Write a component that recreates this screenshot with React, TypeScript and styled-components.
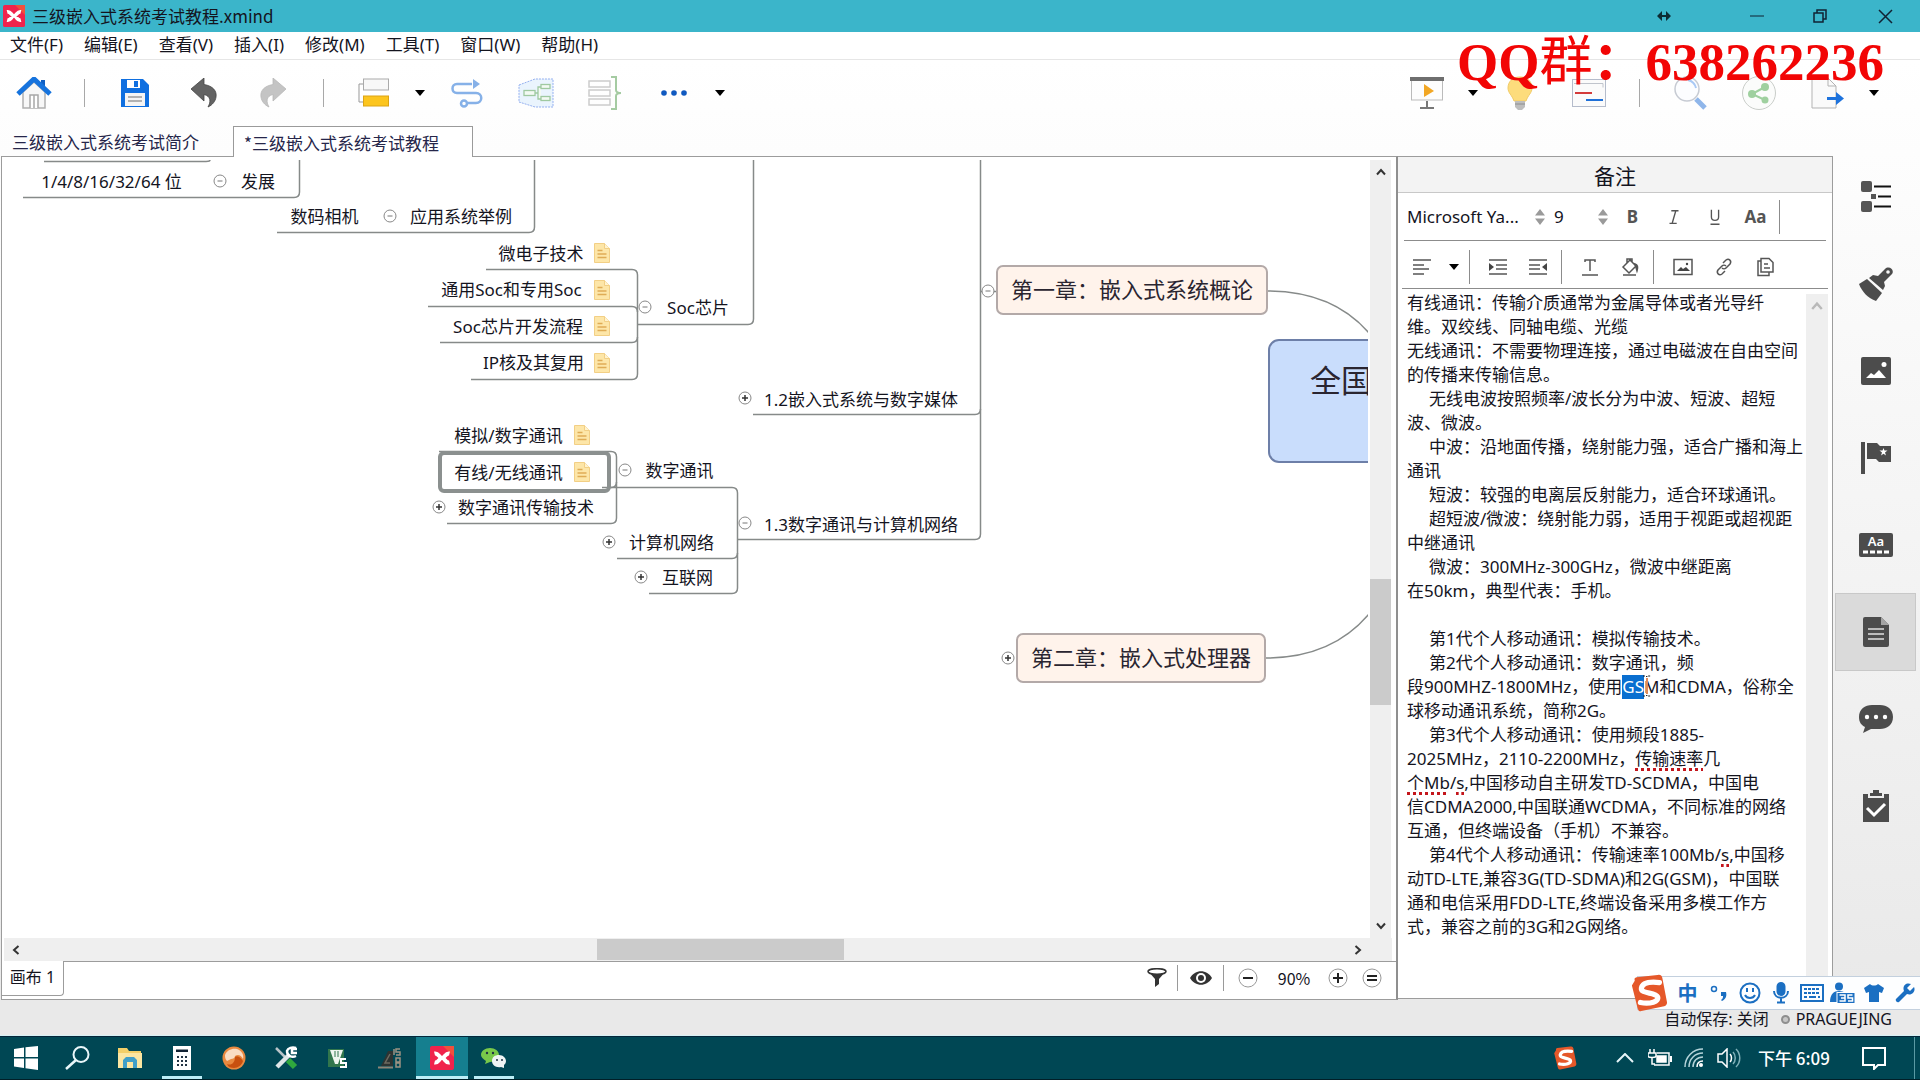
import React from "react";
import styled, { createGlobalStyle, css } from "styled-components";

const UI = `"Noto Sans", "Noto Sans CJK SC", sans-serif`;
const CJK = `"Noto Sans CJK SC", sans-serif`;

const Global = createGlobalStyle`
  * { box-sizing: border-box; }
  body { margin: 0; font-family: ${UI}; font-size: 17px; line-height: 24px; color: #14141e; }
  button, select, input { font: inherit; color: inherit; }
  button { border: 0; padding: 0; background: none; display: inline-flex; align-items: center; justify-content: center; flex: none; }
  svg { display: block; flex: none; }
`;

const Desktop = styled.div`
  min-height: 100vh;
  display: flex;
  flex-direction: column;
  background: linear-gradient(#ffffff 60px, #fcfcfc 200px, #e9e9e9 1000px);
`;

/* ---------- title, menu ---------- */
const TitleBar = styled.header`
  flex: none;
  height: 32px;
  display: flex;
  align-items: center;
  background: #3bb5ca;
  padding-left: 3px;
`;
const Title = styled.h1`
  flex: 1;
  margin: 0 0 0 7px;
  font: 400 17px/24px ${CJK};
`;
const WindowButton = styled.button<{ $w: number }>`
  width: ${(p) => p.$w}px;
  height: 28px;
`;
const MenuBar = styled.nav`
  flex: none;
  height: 28px;
  display: flex;
  align-items: center;
  gap: 21px;
  padding: 0 0 2px 10px;
  background: #fff;
  border-bottom: 1px solid #e6e6e6;
`;

/* ---------- main toolbar ---------- */
const Toolbar = styled.div`
  flex: none;
  height: 66px;
  display: flex;
  align-items: center;
  justify-content: space-between;
  padding: 0 42px 0 8px;
`;
const ToolGroup = styled.div`
  display: flex;
  align-items: center;
  gap: 17px;
`;
const Split = styled.div`
  display: flex;
`;
const ToolButton = styled.button`
  width: 52px;
  height: 40px;
`;
const CaretButton = styled.button`
  width: 24px;
  height: 40px;
  margin: 0 -8px 0 8px;
`;
const ToolRule = styled.span`
  width: 15px;
  height: 28px;
  background: linear-gradient(#a8a8a8, #a8a8a8) center / 1px 100% no-repeat;
`;
const Watermark = styled.div`
  position: absolute;
  top: 32px;
  right: 36px;
  font: 700 53px/60px "Liberation Serif", "Noto Sans CJK SC", serif;
  color: #f20505;
  white-space: nowrap;
  pointer-events: none;
  span { font-weight: 400; }
`;

/* ---------- document tabs ---------- */
const Tabs = styled.div`
  flex: none;
  height: 30px;
  display: flex;
`;
const Tab = styled.button<{ $active?: boolean }>`
  width: ${(p) => (p.$active ? 240 : 233)}px;
  height: ${(p) => (p.$active ? 31 : 30)}px;
  padding: 1px 0 0 ${(p) => (p.$active ? 10 : 12)}px;
  justify-content: flex-start;
  font-family: ${CJK};
  color: #26264a;
  ${(p) =>
    p.$active &&
    css`
      position: relative;
      z-index: 1;
      background: #fff;
      border: 1px solid #9a9a9a;
      border-bottom: 0;
    `}
`;

/* ---------- workspace ---------- */
const Workspace = styled.main`
  flex: 1;
  display: flex;
  margin-left: 1px;
`;
const Editor = styled.section`
  flex: 1;
  min-width: 0;
  display: flex;
  flex-direction: column;
  background: #fff;
  border: 1px solid #9c9c9c;
  border-right: 2px solid #8f8f8f;
  padding-top: 3px;
`;
const CanvasRow = styled.div`
  flex: 1;
  display: flex;
  gap: 2px;
  padding-right: 5px;
`;
const Canvas = styled.div`
  flex: 1;
  min-width: 0;
  min-height: 778px;
  position: relative;
  overflow: hidden;
`;
const Links = styled.svg`
  position: absolute;
  left: 0;
  top: 0;
`;
const VScroll = styled.div`
  width: 21px;
  display: flex;
  flex-direction: column;
  align-items: center;
  background: #efefef;
`;
const VThumb = styled.div`
  width: 21px;
  flex: 126 0 0;
  background: #cbcbcb;
`;
const Track = styled.div<{ $grow: number }>`
  flex: ${(p) => p.$grow} 0 0;
`;
const HScroll = styled.div`
  height: 23px;
  flex: none;
  display: flex;
  align-items: center;
  margin: 0 4px 0 2px;
  padding-right: 22px;
  background: #efefef;
`;
const HThumb = styled.div`
  flex: 247 0 0;
  height: 21px;
  background: #cbcbcb;
`;
const ScrollButton = styled.button`
  width: 24px;
  height: 24px;
`;

const Topic = styled.div<{ $x: number; $y: number; $w: number }>`
  position: absolute;
  left: ${(p) => p.$x}px;
  top: ${(p) => p.$y}px;
  width: ${(p) => p.$w}px;
  height: 24px;
  display: flex;
  justify-content: center;
  white-space: nowrap;
`;
const BoxTopic = styled(Topic)<{ $root?: boolean }>`
  height: ${(p) => (p.$root ? 124 : 50)}px;
  align-items: ${(p) => (p.$root ? "flex-start" : "center")};
  justify-content: ${(p) => (p.$root ? "flex-start" : "center")};
  padding: ${(p) => (p.$root ? "20px 0 0 40px" : "0 0 2px")};
  font-size: ${(p) => (p.$root ? 31 : 22)}px;
  line-height: ${(p) => (p.$root ? 38 : 32)}px;
  color: #2a2530;
  background: ${(p) => (p.$root ? "#c9ddfc" : "#fff3eb")};
  border: 2px solid ${(p) => (p.$root ? "#6d7fa8" : "#b3a9a8")};
  border-radius: ${(p) => (p.$root ? 11 : 7)}px;
`;
const Selected = styled.div<{ $x: number; $y: number }>`
  position: absolute;
  left: ${(p) => p.$x}px;
  top: ${(p) => p.$y}px;
  width: 173px;
  height: 42px;
  border: 4px solid #8b908f;
  border-radius: 6px;
`;
const Marker = styled.span<{ $x: number; $y: number }>`
  position: absolute;
  left: ${(p) => p.$x}px;
  top: ${(p) => p.$y}px;
`;
const Toggle = styled.button<{ $x: number; $y: number }>`
  position: absolute;
  left: ${(p) => p.$x - 8}px;
  top: ${(p) => p.$y - 8}px;
  width: 16px;
  height: 16px;
`;

const SheetBar = styled.div`
  flex: none;
  height: 38px;
  display: flex;
  justify-content: space-between;
  align-items: flex-start;
  background: linear-gradient(#9c9c9c, #9c9c9c) right top / calc(100% - 61px) 1px no-repeat;
`;
const SheetTab = styled.button`
  height: 35px;
  width: 62px;
  padding-bottom: 2px;
  border-right: 1px solid #9c9c9c;
  border-bottom: 1px solid #9c9c9c;
  border-bottom-right-radius: 4px;
  font-size: 16px;
  white-space: nowrap;
`;
const ZoomBar = styled.div`
  display: flex;
  align-items: center;
  height: 34px;
  padding-right: 8px;
`;
const ZoomButton = styled.button<{ $w: number }>`
  width: ${(p) => p.$w}px;
  height: 28px;
`;
const ZoomRule = styled.span`
  width: 1px;
  height: 26px;
  margin: 0 4px;
  background: #9a9a9a;
`;
const ZoomValue = styled.output`
  width: 52px;
  text-align: center;
  font: 16px/24px ${CJK};
`;

/* ---------- notes ---------- */
const Notes = styled.aside`
  width: 435px;
  display: flex;
  flex-direction: column;
  background: #fff;
  border: 1px solid #9c9c9c;
  border-left: 0;
  margin-bottom: 1px;
`;
const NotesTitle = styled.h2`
  height: 36px;
  margin: 0;
  display: flex;
  align-items: center;
  justify-content: center;
  background: #f3f3f3;
  border-bottom: 1px solid #c8c8c8;
  font: 400 21px/30px ${CJK};
`;
const FormatRow = styled.div<{ $pad: number; $top?: number }>`
  height: 47px;
  display: flex;
  align-items: center;
  padding: ${(p) => p.$top || 0}px 0 0 ${(p) => p.$pad}px;
`;
const Rule = styled.hr<{ $inset: number }>`
  flex: none;
  width: calc(100% - ${(p) => p.$inset * 2}px);
  height: 1px;
  margin: 0 auto;
  border: 0;
  background: #8c8c8c;
`;
const Picker = styled.label<{ $w: number; $gap: number }>`
  width: ${(p) => p.$w}px;
  display: flex;
  align-items: center;
  justify-content: space-between;
  margin-right: ${(p) => p.$gap}px;
`;
const Select = styled.select<{ $w: number }>`
  width: ${(p) => p.$w}px;
  appearance: none;
  border: 0;
  padding: 0;
  background: none;
  line-height: 24px;
`;
const FormatButton = styled.button<{ $w?: number }>`
  width: ${(p) => p.$w || 40}px;
  height: 32px;
  color: #555;
`;
const FormatRule = styled.span`
  width: 1px;
  height: 34px;
  margin: 0 8px 0 3px;
  background: #8c8c8c;
`;
const NotesBody = styled.div`
  flex: 1;
  display: flex;
  padding: 2px 4px 1px 9px;
`;
const NoteText = styled.div`
  flex: 1;
  min-width: 0;
  position: relative;
  outline: 0;
  white-space: nowrap;
`;
const Line = styled.p<{ $indent?: boolean }>`
  margin: 0;
  height: 24px;
  text-indent: ${(p) => (p.$indent ? 22 : 0)}px;
`;
const Marked = styled.mark`
  position: relative;
  display: inline-block;
  height: 24px;
  text-indent: 0;
  color: #fff;
  background: #0a6fd0;
`;
const Beam = styled.svg`
  position: absolute;
  right: -8px;
  top: -1px;
`;
const Misspelt = styled.span`
  text-decoration: underline dotted #c4161c 3px;
  text-underline-offset: 3px;
`;
const NoteScroll = styled.div`
  width: 22px;
  margin-top: 3px;
  display: flex;
  justify-content: center;
  background: #efefef;
`;

/* ---------- side bar ---------- */
const SideBar = styled.nav`
  width: 87px;
  display: flex;
  flex-direction: column;
  gap: 9px;
  padding: 2px 4px 0 2px;
`;
const SideButton = styled.button<{ $on?: boolean }>`
  width: 81px;
  height: 78px;
  background: ${(p) => (p.$on ? "#dadada" : "none")};
  box-shadow: ${(p) => (p.$on ? "inset 0 0 0 1px #c8c8c8" : "none")};
`;

/* ---------- status, ime, taskbar ---------- */
const StatusBar = styled.footer`
  flex: none;
  position: relative;
  height: 36px;
  display: flex;
  align-items: center;
  justify-content: flex-end;
  gap: 6px;
  padding: 3px 28px 0 0;
  font-size: 16px;
  border-bottom: 1px solid #d6f2f5;
`;
const SyncDot = styled.span`
  width: 9px;
  height: 9px;
  margin-left: 6px;
  border-radius: 50%;
  border: 2px solid #8e8e8e;
  background: #c6c6c6;
`;
const Ime = styled.div`
  position: absolute;
  right: 0;
  top: -24px;
  height: 34px;
  display: flex;
  align-items: center;
  background: #fdfeff;
  border: 1px solid #c3d0de;
  border-right: 0;
  color: #1b6fc2;
`;
const ImeLogo = styled.button`
  width: 40px;
  margin: 0 3px 0 -9px;
`;
const ImeButton = styled.button`
  width: 31px;
  height: 32px;
  font: 700 20px/24px ${CJK};
`;
const TaskBar = styled.footer`
  flex: none;
  height: 44px;
  display: flex;
  justify-content: space-between;
  background: #004754;
  border-top: 1px solid #05263a;
  border-bottom: 1px solid #001f28;
  color: #fff;
`;
const TaskGroup = styled.div`
  display: flex;
  align-items: center;
`;
const TaskButton = styled.button<{ $run?: boolean; $on?: boolean }>`
  width: 52px;
  height: 42px;
  background: ${(p) => (p.$on ? "#157f8f" : "none")};
  position: relative;
  ${(p) =>
    p.$run &&
    css`
      &::after {
        content: "";
        position: absolute;
        bottom: 0;
        left: ${p.$on ? 0 : 6}px;
        right: ${p.$on ? 0 : 6}px;
        height: 3px;
        background: #bdeef7;
      }
    `}
`;
const TrayButton = styled.button<{ $w: number }>`
  width: ${(p) => p.$w}px;
  height: 42px;
`;
const Clock = styled.time`
  width: 94px;
  margin-right: 2px;
  text-align: center;
  font: 500 17px/24px ${CJK};
`;
const PeekLine = styled.span`
  width: 1px;
  height: 42px;
  margin: 0 5px 0 9px;
  background: #5a9aa4;
`;

/* ---------- icons ---------- */
const Caret = () => (
  <svg width="10" height="6" viewBox="0 0 10 6"><path d="M0 0h10L5 6z" fill="#000" /></svg>
);
const XMark = ({ s }: { s: number }) => (
  <svg width={s} height={s} viewBox="0 0 24 24">
    <rect width="24" height="24" rx="2" fill="#f0234c" />
    <path d="M13 0h11v11z" fill="#f0503c" />
    <path d="M4.500 7.500c4-1 4.500 4.500 7.500 4.500s3.500-5.500 7.500-4.500M4.500 16.500c4 1 4.500-4.500 7.500-4.500s3.500 5.500 7.500 4.500" fill="none" stroke="#fff" strokeWidth="4" />
  </svg>
);
const Sogou = ({ s }: { s: number }) => (
  <svg width={s} height={s} viewBox="0 0 40 40">
    <path d="M5 7Q4 4 7 3.500L29 1Q33 0 34 4L39 30Q39 33 36 34L12 39Q9 40 8 36L2 12z" fill="#e5582a" />
    <path d="M31 9C22 8 13 9 12 15s15 4 17 9-8 8-18 6" fill="none" stroke="#fff" strokeWidth="5.500" strokeLinecap="round" />
  </svg>
);
const NoteMark = () => (
  <svg width="16" height="20" viewBox="0 0 16 20">
    <path d="M.5.500h10l5 5v14H.5z" fill="#fde6a8" stroke="#f2cf85" />
    <path d="M10.500.500v5h5" fill="#fff3cf" stroke="#f2cf85" />
    <path d="M3.500 7.500h5M3.500 11h9M3.500 14.500h9" stroke="#dfac55" strokeWidth="1.500" />
  </svg>
);
const ToggleMark = ({ plus }: { plus?: boolean }) => (
  <svg width="14" height="14" viewBox="0 0 14 14" fill="none">
    <circle cx="7" cy="7" r="6" fill="#fff" stroke="#888" />
    <path d={plus ? "M4 7h6M7 4v6" : "M4.500 7h5"} stroke={plus ? "#333" : "#777"} strokeWidth={plus ? 1.500 : 1} />
  </svg>
);
const Chevron = ({ r, c = "#333", w = 10 }: { r: number; c?: string; w?: number }) => (
  <svg width={w} height={w} viewBox="0 0 10 10"><path d="M1 7.500L5 3l4 4.500" fill="none" stroke={c} strokeWidth="2" transform={`rotate(${r} 5 5)`} /></svg>
);
const Spin = () => (
  <svg width="12" height="16" viewBox="0 0 12 16"><path d="M1 6.500h10L6 0zM1 9.500h10L6 16z" fill="#9a9a9a" /></svg>
);
const Undo = ({ flip }: { flip?: boolean }) => (
  <svg width="28" height="30" viewBox="0 0 28 30">
    <path
      d="M1 11L14 0v6.500C23 8 27 13 26 19c-.500 4-3.500 8-8 10 3-5 3-11-4-12.500V23z"
      fill={flip ? "#c4c4c4" : "#636363"}
      stroke={flip ? "#b8b8b8" : "#444"}
      strokeWidth=".8"
      transform={flip ? "matrix(-1 0 0 1 28 0)" : undefined}
    />
  </svg>
);

const HomeIcon = () => (
  <svg width="36" height="32" viewBox="0 0 36 32">
    <path d="M7 15L18 5l11 10v16H7z" fill="#f7f7f7" stroke="#b0b0b0" strokeWidth="1.500" />
    <path d="M14 31V18h8v13M18 18v13" fill="#fff" stroke="#a8a8a8" strokeWidth="1.500" />
    <path d="M25 3h4v8l-4-4z" fill="#0f5fc4" />
    <path d="M2 17L18 2l16 15" fill="none" stroke="#1673dd" strokeWidth="5" />
  </svg>
);
const SaveIcon = () => (
  <svg width="28" height="28" viewBox="0 0 28 28">
    <path d="M0 0h22l6 6v22H0z" fill="#0f6fe0" />
    <path d="M6 1h13v8H6z" fill="#fff" /><path d="M13 2h4v6h-4z" fill="#0f6fe0" />
    <path d="M4 14h20v13H4z" fill="#f4f4f4" />
    <path d="M7 18h14M7 22h14" stroke="#9a9a9a" strokeWidth="1.500" />
  </svg>
);
const TopicIcon = () => (
  <svg width="32" height="30" viewBox="0 0 32 30">
    <path d="M5 6H1v18h4" fill="none" stroke="#999" />
    <rect x="5.500" y="1" width="25" height="11" fill="#f8f8f8" stroke="#aaa" />
    <rect x="5.500" y="18" width="25" height="10" fill="#fcc51e" stroke="#dca414" />
  </svg>
);
const RelationIcon = () => (
  <svg width="32" height="30" viewBox="0 0 32 30" fill="none" stroke="#86b1e8" strokeWidth="2.500">
    <path d="M21 6H6c-6 0-6 9 0 9h19c7 0 7 10 0 10h-9" />
    <circle cx="13" cy="25.500" r="3" /><path d="M22 1l7 5-7 5z" fill="#86b1e8" stroke="none" />
  </svg>
);
const BoundaryIcon = () => (
  <svg width="36" height="30" viewBox="0 0 36 30">
    <path d="M1 7L17 1h18v28H17L1 24z" fill="#eaf4fd" stroke="#93aff0" strokeDasharray="2 1" />
    <g fill="#f3faf3" stroke="#9fc9a0" strokeWidth="1.300"><path d="M17 15h3M23 9h-3v12h3" /><rect x="6" y="12.500" width="11" height="5" /><rect x="23" y="6.500" width="9" height="4" /><rect x="23" y="18.500" width="9" height="4" /></g>
  </svg>
);
const SummaryIcon = () => (
  <svg width="34" height="34" viewBox="0 0 34 34" fill="none">
    <g stroke="#ccc" strokeWidth="1.500"><rect x="1" y="5" width="21" height="6" /><rect x="1" y="14" width="21" height="6" /><rect x="1" y="23" width="21" height="6" /></g>
    <path d="M23 1h5v13c0 2 2 3 5 3-3 0-5 1-5 3v13h-5" stroke="#a5cba2" strokeWidth="2" />
  </svg>
);
const DotsIcon = () => (
  <svg width="26" height="6" viewBox="0 0 26 6" fill="#1059c0"><circle cx="3" cy="3" r="2.800" /><circle cx="13" cy="3" r="2.800" /><circle cx="23" cy="3" r="2.800" /></svg>
);
const PresentIcon = () => (
  <svg width="34" height="32" viewBox="0 0 34 32">
    <path d="M17 24v6M10 31h14" stroke="#777" strokeWidth="2" />
    <rect x="1.500" y="3" width="31" height="20" fill="#fdfdfd" stroke="#bbb" />
    <path d="M0 0h34v4H0z" fill="#6e6e6e" /><path d="M14 7l10 7-10 6z" fill="#f2a724" />
  </svg>
);
const BulbIcon = () => (
  <svg width="28" height="34" viewBox="0 0 28 34">
    <path d="M14 1c8 0 12 5 12 11 0 5-4 7-6 13H8C6 19 2 17 2 12 2 6 6 1 14 1z" fill="#fddc7c" stroke="#f1cb67" />
    <path d="M9 25h10v6l-3 3h-4l-3-3z" fill="#bdbdbd" /><path d="M9 28h10" stroke="#8e8e8e" />
  </svg>
);
const GanttIcon = () => (
  <svg width="34" height="28" viewBox="0 0 34 28">
    <rect x=".500" y=".500" width="33" height="27" fill="#fbfbfb" stroke="#b5bccb" />
    <path d="M2 4.500h29v4" fill="none" stroke="#c0c4cc" /><path d="M3 14h17" stroke="#d43b3b" strokeWidth="2" /><path d="M14 21h17" stroke="#1f70d8" strokeWidth="2" />
  </svg>
);
const SearchIcon = () => (
  <svg width="34" height="34" viewBox="0 0 34 34" fill="none">
    <path d="M23 23l9 9" stroke="#8fb6ea" strokeWidth="5" /><circle cx="14" cy="13" r="12" fill="#fcfdff" stroke="#c7cbd3" strokeWidth="1.500" />
    <path d="M15 4c5 1 7 4 8 8" stroke="#a9c9f5" strokeWidth="2" />
  </svg>
);
const ShareIcon = () => (
  <svg width="36" height="36" viewBox="0 0 36 36">
    <circle cx="18" cy="18" r="16.500" fill="#fbfcfb" stroke="#c9cdc9" />
    <path d="M24 12l-13 7 13 6" fill="none" stroke="#9fd09f" strokeWidth="2" />
    <g fill="#9fd09f"><circle cx="24" cy="12" r="4" /><circle cx="11" cy="19" r="4" /><circle cx="24" cy="25" r="3.500" /></g>
  </svg>
);
const ExportIcon = () => (
  <svg width="34" height="32" viewBox="0 0 34 32">
    <path d="M1 1h16l8 8v22H1z" fill="#fafafa" stroke="#b3b3b3" /><path d="M17 1v8h8" fill="none" stroke="#b3b3b3" />
    <path d="M16 20h9v-5l8 6.500-8 6.500v-5h-9z" fill="#1e73dd" />
  </svg>
);

/* glyphs on the right edge */
const sideIcons: [string, React.ReactNode][] = [
  ["大纲", <svg width="30" height="32" viewBox="0 0 30 32"><g fill="#555"><rect width="11" height="11" rx="2" /><rect y="20" width="11" height="11" rx="2" /><rect x="10" y="13" width="5" height="5" /></g><path d="M13 5.500h17M17 15.500h13M13 25.500h17" stroke="#111" strokeWidth="2" /></svg>],
  ["格式", <svg width="34" height="34" viewBox="0 0 34 34"><path d="M0 17l8-5 15 14-6 8C9 31 3 25 0 17z" fill="#4c4c4c" /><path d="M10 11l4-3 5 1 7-7c4-4 10 1 7 5l-8 8 1 4-2 4z" fill="#4c4c4c" /><circle cx="29" cy="5" r="1.800" fill="#f7f7f7" /></svg>],
  ["图片", <svg width="30" height="28" viewBox="0 0 30 28"><rect width="30" height="28" rx="2" fill="#4c4c4c" /><path d="M5 21l5-5 3 2 5-5 7 8z" fill="#fff" /><circle cx="23" cy="7.500" r="2.500" fill="#fff" /></svg>],
  ["图标", <svg width="30" height="32" viewBox="0 0 30 32" fill="#4c4c4c"><path d="M0 0h4v32H0zM6 1h10l3 3h11v16H18l-3-3H6z" /><path d="M22.500 6l1 2.500h3l-2.500 2 1 3-2.500-1.800-2.500 1.800 1-3-2.500-2h3z" fill="#fff" /></svg>],
  ["标签", <svg width="34" height="24" viewBox="0 0 34 24"><rect width="34" height="24" rx="2" fill="#4c4c4c" /><text x="17" y="13" textAnchor="middle" fontFamily="Noto Sans, sans-serif" fontWeight="600" fontSize="13" fill="#fff">Aa</text><path d="M4 19h26" stroke="#fff" strokeWidth="3" strokeDasharray="5 2" /></svg>],
  ["备注", <svg width="26" height="30" viewBox="0 0 26 30"><path d="M2 0h16l8 8v20q0 2-2 2H2q-2 0-2-2V2q0-2 2-2z" fill="#4c4c4c" /><path d="M18 0v8h8z" fill="#a5a5a5" /><path d="M5 12h16M5 17h16M5 22h16" stroke="#e0e0e0" strokeWidth="1.500" /></svg>],
  ["批注", <svg width="34" height="28" viewBox="0 0 34 28"><path d="M13 0h8c7 0 13 4 13 12s-6 12-13 12h-9l-8 4 2-6C2 20 0 17 0 12 0 4 6 0 13 0z" fill="#4c4c4c" /><g fill="#fff"><circle cx="8" cy="12" r="2.200" /><circle cx="17" cy="12" r="2.200" /><circle cx="26" cy="12" r="2.200" /></g></svg>],
  ["任务信息", <svg width="26" height="32" viewBox="0 0 26 32"><path d="M0 4h5v4h16V4h5v28H0z" fill="#4c4c4c" /><path d="M7 6V3h3V0h6v3h3v3z" fill="#4c4c4c" /><path d="M4 18l7 7 11-11" fill="none" stroke="#fff" strokeWidth="3" /></svg>],
];

/* coordinates below are relative to the visible part of the map */
const topics: [string, number, number, number][] = [
  ["1/4/8/16/32/64 位", 34, 10, 151],
  ["发展", 238, 10, 36],
  ["数码相机", 288, 45, 69],
  ["应用系统举例", 408, 45, 102],
  ["微电子技术", 497, 82, 84],
  ["通用Soc和专用Soc", 438, 118, 143],
  ["Soc芯片开发流程", 451, 155, 130],
  ["IP核及其复用", 482, 191, 99],
  ["Soc芯片", 664, 136, 64],
  ["模拟/数字通讯", 452, 264, 109],
  ["有线/无线通讯", 452, 301, 109],
  ["数字通讯传输技术", 457, 336, 134],
  ["数字通讯", 643, 299, 69],
  ["计算机网络", 627, 371, 85],
  ["互联网", 660, 406, 51],
  ["1.2嵌入式系统与数字媒体", 764, 228, 190],
  ["1.3数字通讯与计算机网络", 764, 353, 190],
];
const markers: [number, number][] = [[592, 83], [592, 120], [592, 156], [592, 193], [572, 265], [572, 302]];
const toggles: [number, number, boolean][] = [
  [218, 21, false], [388, 56, false], [643, 147, false], [623, 310, false], [743, 363, false], [986, 131, false],
  [437, 347, true], [607, 382, true], [639, 417, true], [743, 238, true], [1006, 498, true],
];
const links = [
  "M42 1.500H204Q208 1.500 208 0", "M21 37.500H292Q297.500 37.500 297.500 32V0", "M275 72.500H527Q532.500 72.500 532.500 67V0",
  "M484 109.500H630Q635.500 109.500 635.500 115V214Q635.500 219.500 630 219.500H469", "M426 146.500H630Q635.500 146.500 635.500 152",
  "M438 182.500H630Q635.500 182.500 635.500 177", "M635 164.500H746Q751.500 164.500 751.500 159V0",
  "M751 254.500H973Q978.500 254.500 978.500 249", "M735 379.500H973Q978.500 379.500 978.500 374V0", "M978 131.500H994",
  "M437 291.500H609Q614.500 291.500 614.500 297V358Q614.500 363.500 609 363.500H445", "M600 327.500H730Q735.500 327.500 735.500 333V428Q735.500 433.500 730 433.500H647",
  "M615 398.500H730Q735.500 398.500 735.500 393", "M609 327.500Q614.500 327.500 614.500 322",
  "M1265 131C1307 131 1342 144 1367 173", "M1264 498C1304 498 1340 486 1367 454",
];

const notes: [boolean, React.ReactNode][] = [
  [false, "有线通讯：传输介质通常为金属导体或者光导纤"],
  [false, "维。双绞线、同轴电缆、光缆"],
  [false, "无线通讯：不需要物理连接，通过电磁波在自由空间"],
  [false, "的传播来传输信息。"],
  [true, "无线电波按照频率/波长分为中波、短波、超短"],
  [false, "波、微波。"],
  [true, "中波：沿地面传播，绕射能力强，适合广播和海上"],
  [false, "通讯"],
  [true, "短波：较强的电离层反射能力，适合环球通讯。"],
  [true, "超短波/微波：绕射能力弱，适用于视距或超视距"],
  [false, "中继通讯"],
  [true, "微波：300MHz-300GHz，微波中继距离"],
  [false, "在50km，典型代表：手机。"],
  [false, ""],
  [true, "第1代个人移动通讯：模拟传输技术。"],
  [true, "第2代个人移动通讯：数字通讯，频"],
  [false, <>段900MHZ-1800MHz，使用<Marked>GS<Beam width="10" height="24" viewBox="0 0 10 24" fill="none"><path d="M5 4v16" stroke="#e08a5a" strokeWidth="2" /><path d="M1 2h3l1 1 1-1h3M1 22h3l1-1 1 1h3" stroke="#222" strokeDasharray="2 1" /></Beam></Marked>M和CDMA，俗称全</>],
  [false, "球移动通讯系统，简称2G。"],
  [true, "第3代个人移动通讯：使用频段1885-"],
  [false, <>2025MHz，2110-2200MHz，<Misspelt>传输速率</Misspelt>几</>],
  [false, <><Misspelt>个Mb</Misspelt>/<Misspelt>s</Misspelt>,中国移动自主研发TD-SCDMA，中国电</>],
  [false, "信CDMA2000,中国联通WCDMA，不同标准的网络"],
  [false, "互通，但终端设备（手机）不兼容。"],
  [true, <>第4代个人移动通讯：传输速率100Mb/<Misspelt>s</Misspelt>,中国移</>],
  [false, "动TD-LTE,兼容3G(TD-SDMA)和2G(GSM)，中国联"],
  [false, "通和电信采用FDD-LTE,终端设备采用多模工作方"],
  [false, "式，兼容之前的3G和2G网络。"],
];

const Glyph = ({ children, s = 20 }: { children: React.ReactNode; s?: number }) => (
  <svg width={s} height={s} viewBox="0 0 20 20" fill="none" stroke="#555" strokeWidth="1.500">{children}</svg>
);

export default function App() {
  return (
    <Desktop>
      <Global />
      <TitleBar>
        <XMark s={22} />
        <Title>三级嵌入式系统考试教程.xmind</Title>
        <WindowButton $w={120} aria-label="移动">
          <svg width="14" height="10" viewBox="0 0 14 10"><path d="M5 0v4h4V0l5 5-5 5V6H5v4L0 5z" fill="#0c2b33" /></svg>
        </WindowButton>
        <WindowButton $w={66} aria-label="最小化">
          <svg width="14" height="2" viewBox="0 0 14 2"><path d="M0 1h14" stroke="#123" /></svg>
        </WindowButton>
        <WindowButton $w={60} aria-label="还原">
          <svg width="14" height="14" viewBox="0 0 14 14" fill="none" stroke="#123" strokeWidth="1.500"><path d="M1 4h9v9H1zM4 4V1h9v9h-3" /></svg>
        </WindowButton>
        <WindowButton $w={70} aria-label="关闭">
          <svg width="15" height="15" viewBox="0 0 15 15"><path d="M1 1l13 13M14 1L1 14" stroke="#123" strokeWidth="1.500" /></svg>
        </WindowButton>
      </TitleBar>
      <MenuBar>
        {["文件(F)", "编辑(E)", "查看(V)", "插入(I)", "修改(M)", "工具(T)", "窗口(W)", "帮助(H)"].map((m) => (
          <button key={m}>{m}</button>
        ))}
      </MenuBar>
      <Toolbar>
        <ToolGroup>
          <ToolButton aria-label="主页"><HomeIcon /></ToolButton>
          <ToolRule />
          <ToolButton aria-label="保存"><SaveIcon /></ToolButton>
          <ToolButton aria-label="撤销"><Undo /></ToolButton>
          <ToolButton aria-label="重做"><Undo flip /></ToolButton>
          <ToolRule />
          <Split>
            <ToolButton aria-label="主题"><TopicIcon /></ToolButton>
            <CaretButton aria-label="主题选项"><Caret /></CaretButton>
          </Split>
          <ToolButton aria-label="联系"><RelationIcon /></ToolButton>
          <ToolButton aria-label="外框"><BoundaryIcon /></ToolButton>
          <ToolButton aria-label="概要"><SummaryIcon /></ToolButton>
          <Split>
            <ToolButton aria-label="更多"><DotsIcon /></ToolButton>
            <CaretButton aria-label="更多选项"><Caret /></CaretButton>
          </Split>
        </ToolGroup>
        <ToolGroup>
          <Split>
            <ToolButton aria-label="演示"><PresentIcon /></ToolButton>
            <CaretButton aria-label="演示选项"><Caret /></CaretButton>
          </Split>
          <ToolButton aria-label="头脑风暴"><BulbIcon /></ToolButton>
          <ToolButton aria-label="甘特图"><GanttIcon /></ToolButton>
          <ToolRule />
          <ToolButton aria-label="搜索"><SearchIcon /></ToolButton>
          <ToolButton aria-label="分享"><ShareIcon /></ToolButton>
          <Split>
            <ToolButton aria-label="导出"><ExportIcon /></ToolButton>
            <CaretButton aria-label="导出选项"><Caret /></CaretButton>
          </Split>
        </ToolGroup>
      </Toolbar>
      <Watermark>QQ<span>群</span>：638262236</Watermark>
      <Tabs>
        <Tab>三级嵌入式系统考试简介</Tab>
        <Tab $active>*三级嵌入式系统考试教程</Tab>
      </Tabs>

      <Workspace>
        <Editor>
          <CanvasRow>
            <Canvas>
              <Links width="1367" height="778" viewBox="0 0 1367 778" fill="none" stroke="#868a89" strokeWidth="1.500">
                {links.map((d) => <path key={d} d={d} />)}
              </Links>
              <Selected $x={436} $y={291} />
              {topics.map(([t, x, y, w]) => <Topic key={t} $x={x} $y={y} $w={w}>{t}</Topic>)}
              <BoxTopic $x={994} $y={105} $w={272}>第一章：嵌入式系统概论</BoxTopic>
              <BoxTopic $x={1014} $y={473} $w={250}>第二章：嵌入式处理器</BoxTopic>
              <BoxTopic $root $x={1266} $y={179} $w={420}>全国</BoxTopic>
              {markers.map(([x, y]) => <Marker key={`${x}-${y}`} $x={x} $y={y}><NoteMark /></Marker>)}
              {toggles.map(([x, y, plus]) => (
                <Toggle key={`${x}-${y}`} $x={x} $y={y} aria-label={plus ? "展开" : "收起"}><ToggleMark plus={plus} /></Toggle>
              ))}
            </Canvas>
            <VScroll>
              <ScrollButton aria-label="向上"><Chevron r={0} /></ScrollButton>
              <Track $grow={395} />
              <VThumb />
              <Track $grow={209} />
              <ScrollButton aria-label="向下"><Chevron r={180} /></ScrollButton>
            </VScroll>
          </CanvasRow>
          <HScroll>
            <ScrollButton aria-label="向左"><Chevron r={-90} /></ScrollButton>
            <Track $grow={568} />
            <HThumb />
            <Track $grow={501} />
            <ScrollButton aria-label="向右"><Chevron r={90} /></ScrollButton>
          </HScroll>
          <SheetBar>
            <SheetTab>画布 1</SheetTab>
            <ZoomBar>
              <ZoomButton $w={32} aria-label="筛选">
                <svg width="20" height="20" viewBox="0 0 20 20"><path d="M1 3l7 8v8l4-3v-5l7-8z" fill="#333" /><ellipse cx="10" cy="3.500" rx="9" ry="2.800" fill="#fff" stroke="#333" strokeWidth="1.500" /></svg>
              </ZoomButton>
              <ZoomRule />
              <ZoomButton $w={37} aria-label="显示">
                <svg width="22" height="18" viewBox="0 0 22 18"><path d="M0 9C5 0 17 0 22 9 17 18 5 18 0 9z" fill="#333" /><circle cx="11" cy="9" r="5" fill="#fff" /><circle cx="11" cy="9" r="3" fill="#333" /></svg>
              </ZoomButton>
              <ZoomRule />
              <ZoomButton $w={40} aria-label="缩小">
                <svg width="20" height="20" viewBox="0 0 20 20"><circle cx="10" cy="10" r="9" fill="none" stroke="#999" /><path d="M5 10h10" stroke="#222" strokeWidth="2" /></svg>
              </ZoomButton>
              <ZoomValue>90%</ZoomValue>
              <ZoomButton $w={35} aria-label="放大">
                <svg width="20" height="20" viewBox="0 0 20 20"><circle cx="10" cy="10" r="9" fill="none" stroke="#999" /><path d="M5 10h10M10 5v10" stroke="#222" strokeWidth="2" /></svg>
              </ZoomButton>
              <ZoomButton $w={33} aria-label="适应">
                <svg width="20" height="20" viewBox="0 0 20 20"><circle cx="10" cy="10" r="9" fill="none" stroke="#999" /><path d="M5 8h10M5 12h10" stroke="#222" strokeWidth="2" /></svg>
              </ZoomButton>
            </ZoomBar>
          </SheetBar>
        </Editor>

        <Notes>
          <NotesTitle>备注</NotesTitle>
          <FormatRow $pad={9}>
            <Picker $w={139} $gap={8}>
              <Select $w={124} aria-label="字体"><option>Microsoft Ya...</option></Select><Spin />
            </Picker>
            <Picker $w={55} $gap={3}>
              <Select $w={36} aria-label="字号"><option>9</option></Select><Spin />
            </Picker>
            <FormatButton $w={41} aria-label="粗体"><b>B</b></FormatButton>
            <FormatButton $w={41} aria-label="斜体"><Glyph s={18}><path d="M7 3h8M5 17h8M12 3L8 17" /></Glyph></FormatButton>
            <FormatButton $w={41} aria-label="下划线"><Glyph s={18}><path d="M6 2v8c0 5 8 5 8 0V2M5 18h10" /></Glyph></FormatButton>
            <FormatButton $w={41} aria-label="清除格式"><b>Aa</b></FormatButton>
            <FormatRule />
          </FormatRow>
          <Rule $inset={6} />
          <FormatRow $pad={4} $top={4}>
            <FormatButton aria-label="对齐"><Glyph><path d="M1 3h18M1 8h11M1 12h16M1 17h11" /></Glyph></FormatButton>
            <FormatButton $w={24} aria-label="对齐选项"><Caret /></FormatButton>
            <FormatRule />
            <FormatButton aria-label="增加缩进"><Glyph><path d="M1 3h18M8 8h11M8 12h11M1 17h18" /><path d="M1 6l5 4-5 4z" fill="#444" stroke="none" /></Glyph></FormatButton>
            <FormatButton aria-label="减少缩进"><Glyph><path d="M1 3h18M1 8h11M1 12h11M1 17h18" /><path d="M19 6l-5 4 5 4z" fill="#444" stroke="none" /></Glyph></FormatButton>
            <FormatRule />
            <FormatButton aria-label="文字颜色"><Glyph><path d="M5 5V3h10v2M10 3v11M2 18h16" /></Glyph></FormatButton>
            <FormatButton aria-label="背景颜色"><Glyph><path d="M3 10l7-7 6 6-7 7zM7 6V2h5v3M3 18h13" /><path d="M15 7c3 1 3 4 2 7z" fill="#555" /></Glyph></FormatButton>
            <FormatRule />
            <FormatButton $w={41} aria-label="插入图片"><Glyph><path d="M1 2.500h18v15H1z" /><path d="M4 14l4-4 2 2 3-2 4 4z" fill="#444" stroke="none" /><circle cx="14" cy="7" r="1.200" fill="#444" stroke="none" /></Glyph></FormatButton>
            <FormatButton $w={41} aria-label="插入链接"><Glyph><path d="M9 6l3-3c3-2 6 1 4 4l-4 4c-1 1-3 1-4 0M11 14l-3 3c-3 2-6-1-4-4l4-4c1-1 3-1 4 0" /></Glyph></FormatButton>
            <FormatButton $w={41} aria-label="粘贴"><Glyph><path d="M6 1.500h8l4 4V15H6zM6 4H3v14.500h11V15M9 7h4M9 11h6" /></Glyph></FormatButton>
          </FormatRow>
          <Rule $inset={4} />
          <NotesBody>
            <NoteText role="textbox" aria-multiline="true" aria-label="备注内容" tabIndex={0}>
              {notes.map(([indent, text], i) => <Line key={i} $indent={indent}>{text}</Line>)}
            </NoteText>
            <NoteScroll><ScrollButton aria-label="备注向上"><Chevron r={0} c="#b9b9b9" w={12} /></ScrollButton></NoteScroll>
          </NotesBody>
        </Notes>

        <SideBar>
          {sideIcons.map(([name, icon]) => (
            <SideButton key={name} $on={name === "备注"} aria-label={name}>{icon}</SideButton>
          ))}
        </SideBar>
      </Workspace>

      <StatusBar>
        <span>自动保存: 关闭</span>
        <SyncDot />
        <span>PRAGUEJING</span>
        <Ime>
          <ImeLogo aria-label="搜狗输入法"><Sogou s={38} /></ImeLogo>
          <ImeButton>中</ImeButton>
          <ImeButton aria-label="标点"><svg width="18" height="20" viewBox="0 0 18 20"><circle cx="4" cy="6" r="2.500" fill="none" stroke="currentColor" strokeWidth="1.500" /><path d="M11 9h5c1 4 0 7-4 9l-1-1c2-1 2-3 2-4h-2z" fill="currentColor" /></svg></ImeButton>
          <ImeButton aria-label="表情"><svg width="22" height="22" viewBox="0 0 22 22" fill="none" stroke="currentColor" strokeWidth="2"><circle cx="11" cy="11" r="9.500" /><path d="M8 6v4M14 6v4M6 13c2 4 8 4 10 0" /></svg></ImeButton>
          <ImeButton aria-label="语音"><svg width="18" height="22" viewBox="0 0 18 22" fill="none" stroke="currentColor" strokeWidth="2"><rect x="5.500" y="1" width="7" height="12" rx="3.500" fill="currentColor" /><path d="M2 9c0 9 14 9 14 0M9 16v4M5 20.500h8" /></svg></ImeButton>
          <ImeButton aria-label="键盘"><svg width="24" height="18" viewBox="0 0 24 18" fill="none" stroke="currentColor" strokeWidth="2"><path d="M1 1h22v16H1z" /><path d="M4 5h16M4 9h16" strokeDasharray="3 1" /><path d="M4 13h3M9 13h7M18 13h2" /></svg></ImeButton>
          <ImeButton aria-label="用户"><svg width="26" height="22" viewBox="0 0 26 22"><g fill="currentColor"><circle cx="9" cy="4.500" r="4" /><path d="M0 20c0-8 4-11 9-11s8 3 8 6v5z" /><rect x="7" y="10.500" width="18" height="11" stroke="#fff" /></g><path d="M9.500 13H15v6H9.500M11 16h4M22.500 13H18v3h4.500v3H18" fill="none" stroke="#fff" strokeWidth="1.500" /></svg></ImeButton>
          <ImeButton aria-label="皮肤"><svg width="20" height="20" viewBox="0 0 20 20"><path d="M6 1c2 2 6 2 8 0l6 4-2 5-3-1v10H5V9l-3 1-2-5z" fill="currentColor" /></svg></ImeButton>
          <ImeButton aria-label="工具箱"><svg width="20" height="20" viewBox="0 0 20 20"><path d="M19 4l-4 4-3-3 4-4c-5-2-9 2-7 7L1 16c-1 2 1 4 3 3l8-8c5 2 9-3 7-7z" fill="currentColor" /></svg></ImeButton>
        </Ime>
      </StatusBar>

      <TaskBar>
        <TaskGroup>
          <TaskButton aria-label="开始"><svg width="24" height="24" viewBox="0 0 24 24" fill="#fff"><path d="M0 3l10-1.500V11H0zM11.500 1.300L24 0v11H11.500zM0 12.500h10V22L0 20.500zM11.500 12.500H24V24l-12.500-1.800z" /></svg></TaskButton>
          <TaskButton aria-label="搜索"><svg width="26" height="24" viewBox="0 0 26 24" fill="none" stroke="#e9f7fa" strokeWidth="2"><circle cx="16" cy="8.500" r="7.500" /><path d="M11 14L1 23" strokeWidth="2.500" /></svg></TaskButton>
          <TaskButton aria-label="文件资源管理器"><svg width="26" height="22" viewBox="0 0 26 22"><path d="M1 1h9l2 3h12v17H1z" fill="#f3cf68" /><path d="M1 6h24v15H1z" fill="#fbe6a2" /><path d="M6 21v-8l3-3h8l3 3v8h-4v-6h-6v6z" fill="#3f9fc8" /></svg></TaskButton>
          <TaskButton $run aria-label="计算器"><svg width="18" height="24" viewBox="0 0 18 24"><rect width="18" height="24" fill="#fff" /><path d="M3 3.500h12v2.500H3z" fill="#123" /><path d="M4 11h11M4 15h11M4 19h11" stroke="#234" strokeWidth="2" strokeDasharray="2 2" /></svg></TaskButton>
          <TaskButton aria-label="浏览器"><svg width="24" height="24" viewBox="0 0 24 24"><circle cx="12" cy="12" r="11.500" fill="#e9893f" /><path d="M3 9C5 4 10 2 15 3c5 2 7 6 6 10-2-4-5-5-8-3 0 2-2 3-4 3l-4 2c-2-2-2-4-2-6z" fill="#f9dcc2" /><path d="M13 11c3-2 6 1 8 4-1 4-5 7-9 7-3 0-6-1-7-4 4 2 8-1 8-7z" fill="#c8500f" /></svg></TaskButton>
          <TaskButton aria-label="系统工具"><svg width="24" height="24" viewBox="0 0 24 24" fill="none"><path d="M2 2l11 11" stroke="#b8c4c8" strokeWidth="2.500" /><path d="M14 14l7 7" stroke="#2fa83e" strokeWidth="6" /><path d="M3 21L15 9" stroke="#dfe6e8" strokeWidth="4.500" /><path d="M23 3h-5v4h5M22 10c-4 2-9 0-9-5 1-3 5-4 9-3" stroke="#fff" strokeWidth="2.500" /></svg></TaskButton>
          <TaskButton aria-label="编辑器"><svg width="20" height="22" viewBox="0 0 20 22"><path d="M0 2h16v18H0z" fill="#31764c" /><path d="M2 3h13l-5 14H7z" fill="#eef5ee" /><path d="M7 4v6M10 4v6" stroke="#31764c" /><path d="M18 12h-5v4h5v4h-6" fill="none" stroke="#fff" strokeWidth="2" /></svg></TaskButton>
          <TaskButton aria-label="字体工具"><svg width="24" height="22" viewBox="0 0 24 22" fill="none"><path d="M3 19L10 4h5v15z" fill="#2d3433" /><path d="M12 7l-5 9h5" stroke="#6d6a60" strokeWidth="1.500" /><path d="M0 20.500h15" stroke="#8d8577" strokeWidth="2" /><path d="M16 2v6M22 2h-4v3h4v3h-4M18 11h4v4h-4zM18 16h4v4h-4z" stroke="#9c9382" strokeWidth="1.500" /></svg></TaskButton>
          <TaskButton $run $on aria-label="XMind"><XMark s={24} /></TaskButton>
          <TaskButton $run aria-label="微信"><svg width="26" height="22" viewBox="0 0 26 22"><path d="M9 1c5 0 9 3 9 7s-4 7-9 7l-5 2 1-3C2 12 0 10 0 8c0-4 4-7 9-7z" fill="#79c94a" /><path d="M18 8c4 0 7 3 7 6 0 2-1 3-2 4v3l-3-1c-5 1-9-2-9-6s3-6 7-6z" fill="#f0f4f4" /><g fill="#234"><circle cx="6" cy="6" r="1.200" /><circle cx="12" cy="6" r="1.200" /><circle cx="16" cy="13" r="1" /><circle cx="21" cy="13" r="1" /></g></svg></TaskButton>
        </TaskGroup>
        <TaskGroup>
          <TrayButton $w={84} aria-label="搜狗"><Sogou s={24} /></TrayButton>
          <TrayButton $w={36} aria-label="显示隐藏的图标"><svg width="18" height="10" viewBox="0 0 18 10"><path d="M1 9l8-8 8 8" fill="none" stroke="#e6f5f8" strokeWidth="2" /></svg></TrayButton>
          <TrayButton $w={34} aria-label="电源"><svg width="24" height="18" viewBox="0 0 24 18" fill="none" stroke="#fff" strokeWidth="1.500"><path d="M2 0v4M6 0v4M0 4h8v3c0 2-8 2-8 0zM4 9v6h3" /><path d="M9 4h12v12H6" /><path d="M9 7h9v6H9z" fill="#fff" /><path d="M23 7v6" strokeWidth="2" /></svg></TrayButton>
          <TrayButton $w={34} aria-label="网络"><svg width="20" height="20" viewBox="0 0 20 20" fill="none" stroke="#b4d4da" strokeWidth="1.500"><path d="M1 19C1 9 9 1 19 1M5 19C5 11 11 5 19 5M9 19c0-6 4-10 10-10" /><path d="M13 19c0-4 2-6 6-6" stroke="#fff" /><circle cx="17" cy="17" r="2" fill="#fff" stroke="none" /></svg></TrayButton>
          <TrayButton $w={36} aria-label="音量"><svg width="24" height="20" viewBox="0 0 24 20" fill="none" stroke="#fff" strokeWidth="1.500"><path d="M1 6h4l5-5v18l-5-5H1z" /><path d="M13 6c2 2 2 6 0 8" /><path d="M16 4c3 3 3 9 0 12M19 1c5 5 5 13 0 18" stroke="#7fb0b8" /></svg></TrayButton>
          <Clock>下午 6:09</Clock>
          <TrayButton $w={62} aria-label="操作中心"><svg width="24" height="24" viewBox="0 0 24 24"><path d="M1 2h22v17h-7l-4 4v-4H1z" fill="none" stroke="#fff" strokeWidth="2" /></svg></TrayButton>
          <PeekLine />
        </TaskGroup>
      </TaskBar>
    </Desktop>
  );
}
